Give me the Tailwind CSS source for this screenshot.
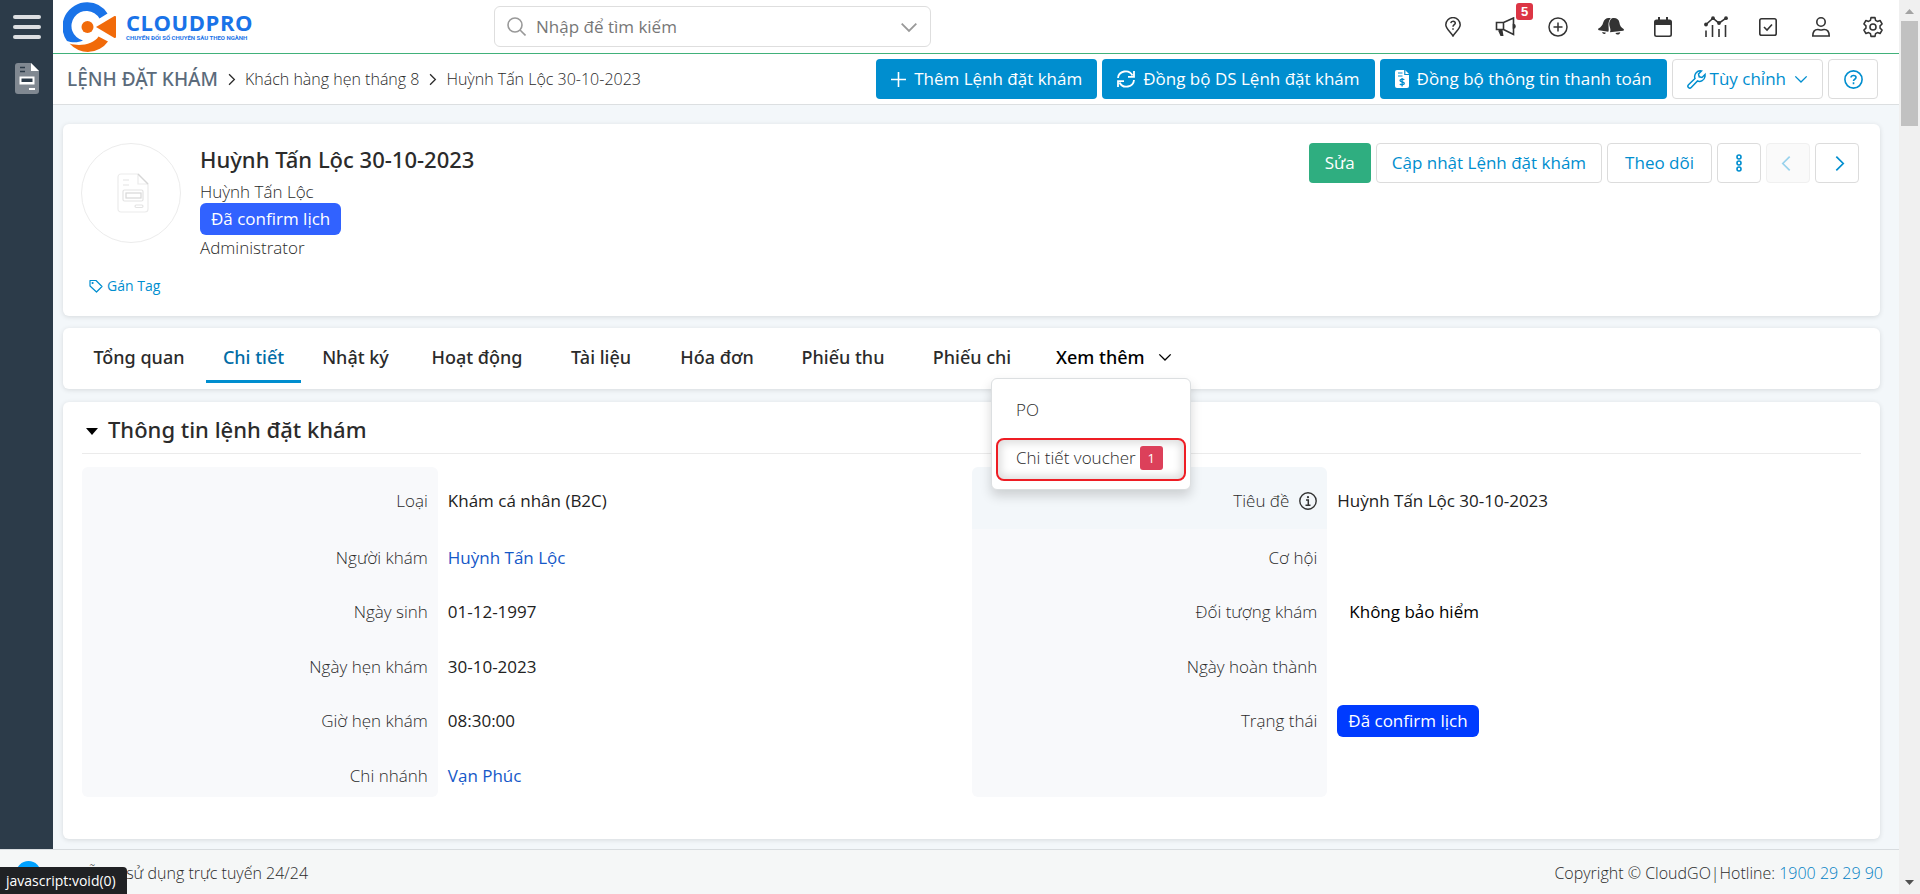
<!DOCTYPE html>
<html lang="vi">
<head>
<meta charset="utf-8">
<title>Lệnh đặt khám</title>
<script src="https://cdn.jsdelivr.net/npm/@tailwindcss/browser@4"></script>
</head>
<body class="flex h-screen overflow-hidden bg-[#f3f7fa] font-['Open_Sans','Noto_Sans',sans-serif] text-[17px] text-[#2b2b2b]">
<svg class="hidden">
  <symbol id="chev-down" viewBox="0 0 16 16"><path d="M1.5 5 8 11.5 14.5 5" fill="none" stroke="currentColor" stroke-width="1.6"/></symbol>
  <symbol id="chev-right" viewBox="0 0 16 16"><path d="M5 1.5 11.5 8 5 14.5" fill="none" stroke="currentColor" stroke-width="1.6"/></symbol>
</svg>

<div class="flex min-w-0 flex-1 flex-col">
  <div class="flex min-h-0 flex-1">
    <nav class="flex w-[53px] shrink-0 flex-col items-center bg-[#2c3b49] pt-[15px]" aria-label="Menu chính">
      <button class="flex w-7 flex-col gap-[6px]" aria-label="Mở menu">
        <span class="h-1 w-full rounded-full bg-[#dcdee1]"></span>
        <span class="h-1 w-full rounded-full bg-[#dcdee1]"></span>
        <span class="h-1 w-full rounded-full bg-[#dcdee1]"></span>
      </button>
      <a href="#" class="mt-6" aria-label="Lệnh đặt khám">
        <svg width="24" height="31" viewBox="0 0 24 31"><path d="M3 0h13l8 8v20a3 3 0 0 1-3 3H3a3 3 0 0 1-3-3V3a3 3 0 0 1 3-3z" fill="#808891"/><path d="M16 0v8h8z" fill="#fff"/><path d="M5 4.500h5M5 8.500h5" stroke="#2c3b49" stroke-width="1.500"/><rect x="4.500" y="13.500" width="15" height="8" fill="#fff"/><rect x="6.500" y="15.500" width="11" height="3.500" fill="#2c3b49"/><path d="M14 26h6" stroke="#fff" stroke-width="2"/></svg>
      </a>
    </nav>

    <main class="flex min-w-0 flex-1 flex-col">
      <header class="flex h-[54px] shrink-0 items-center border-b border-[#41b17a] bg-white pl-[10px]">
        <a href="#" class="flex items-center gap-[10px]" aria-label="CloudPro">
          <svg width="53" height="52" viewBox="0 0 53 52">
            <path d="M44.500 12.500A24.500 24.500 0 0 0 24.500 1.300A24.500 24.500 0 0 0 4 40C9 42 16 41.500 20 39.500A15 15 0 1 1 36.500 17.500Z" fill="#1a73e8"/>
            <path d="M6.500 42.500C17 46 31 43 35.500 35.500L45 40.500A24.500 24.500 0 0 1 6.500 42.500Z" fill="#f16a0a"/>
            <circle cx="24.500" cy="26" r="6" fill="#f16a0a"/>
            <path d="M33 26 51.500 15Q53 14.500 53 16V35.500Q53 37.500 51.500 37Z" fill="#f16a0a"/>
          </svg>
          <span class="flex w-[125px] flex-col whitespace-nowrap text-[#1a73e8]">
            <span class="text-[22px] leading-[18px] font-bold tracking-wide">CLOUDPRO</span>
            <span class="mt-1 font-['Roboto',sans-serif] text-[6px] leading-[6px] font-bold">CHUYỂN ĐỔI SỐ CHUYÊN SÂU THEO NGÀNH</span>
          </span>
        </a>
        <label class="ml-[243px] flex h-[41px] w-[437px] shrink-0 items-center rounded-md border border-[#dedede] px-3">
          <svg width="19" height="19" viewBox="0 0 19 19" fill="none" stroke="#999" stroke-width="1.600"><circle cx="8" cy="8" r="7"/><path d="m13 13 5.500 5.500"/></svg>
          <input type="text" placeholder="Nhập để tìm kiếm" aria-label="Tìm kiếm" class="ml-[10px] min-w-0 flex-1 outline-none placeholder:text-[#777]">
          <svg class="size-[18px] text-[#999]"><use href="#chev-down"/></svg>
        </label>
        <div class="ml-auto flex items-center">
          <button class="flex w-[52px] justify-center" aria-label="Hướng dẫn"><svg width="16" height="20" viewBox="0 0 16 20" fill="none" stroke="#333" stroke-width="1.500"><path d="M8 19C5 14.500.8 11.500.8 7.800a7.200 7.200 0 0 1 14.400 0C15.200 11.500 11 14.500 8 19z"/><path d="M5.800 6.200c.3-2.600 4.700-2.400 4.500.1C10.200 7.700 8 7.800 8 9.700M8 11.200v1.600"/></svg></button>
          <button class="relative flex w-[53px] justify-center" aria-label="Thông báo"><svg width="21" height="20" viewBox="0 0 21 20" fill="none" stroke="#333" stroke-width="1.600"><path d="M1.500 5.500h7v7h-7zM8.500 5.500 18.500 1v16.500L8.500 12.500"/><path d="M18.500 7.500c2 0 2 3.500 0 3.500z" fill="#333"/><path d="M3.500 13v1.500l2 4.500h3l-1-6z" fill="#333" stroke="none"/></svg><span class="absolute -top-[14px] left-[37px] flex h-[17px] w-[17px] items-center justify-center rounded-[3px] bg-[#dc3545] font-['Liberation_Sans',sans-serif] text-[13px] leading-none font-bold text-white">5</span></button>
          <button class="flex w-[52px] justify-center" aria-label="Thêm mới"><svg width="20" height="20" viewBox="0 0 20 20" fill="none" stroke="#333" stroke-width="1.500"><circle cx="10" cy="10" r="9"/><path d="M10 5.500v9M5.500 10h9"/></svg></button>
          <button class="flex w-[53px] justify-center" aria-label="Chuông báo"><svg width="26" height="19" viewBox="0 0 26 19" fill="#333"><path d="M12.800 1.200C9 .2 6.300 1.800 5.300 5.200 4.400 8.500 3 10 .4 11.500c-.5.600-.3 1.600.6 1.800l9.300 1.400C11.800 11.500 8.500 6 12.800 1.200zM4.200 15l3.800.7c-1 1.900-3.600 1.500-3.800-.7z"/><path d="M14 1.200c4.200-.8 6.800 1 7.400 4.300.5 3.300 1.700 5 4.200 6.500.6.600.3 1.600-.5 1.800l-13.200 1.400c1.700-3.400-1.200-5.500-.6-9.200.3-2.200 1.200-3.900 2.700-4.800zM17.500 16l4.800-.7c-.4 2.800-4 3.100-4.800.7z"/></svg></button>
          <button class="flex w-[52px] justify-center" aria-label="Lịch"><svg width="18" height="20" viewBox="0 0 18 20"><path d="M2.500 2.500H4V0h2v2.500h6V0h2v2.500h1.500A2.500 2.500 0 0 1 18 5v12.500a2.500 2.500 0 0 1-2.500 2.500h-13A2.500 2.500 0 0 1 0 17.500V5a2.500 2.500 0 0 1 2.500-2.500zM1.600 8v9.500c0 .5.400.9.900.9h13c.5 0 .9-.4.900-.9V8z" fill="#333" fill-rule="evenodd"/></svg></button>
          <button class="flex w-[53px] justify-center" aria-label="Báo cáo"><svg width="24" height="21" viewBox="0 0 24 21" fill="none" stroke="#333" stroke-width="1.600"><path d="m2 8.500 7-6.300 6 5L22 2.200"/><path d="M2 14.500V21M8.500 9v12M15 13v8M21.500 9v12"/><g fill="#333" stroke="none"><circle cx="2" cy="8.500" r="1.900"/><circle cx="9" cy="2.200" r="1.900"/><circle cx="15" cy="7" r="1.900"/><circle cx="22" cy="2.200" r="1.900"/></g></svg></button>
          <button class="flex w-[52px] justify-center" aria-label="Công việc"><svg width="18" height="18" viewBox="0 0 18 18" fill="none" stroke="#333" stroke-width="1.600"><rect x=".8" y=".8" width="16.400" height="16.400" rx="1.800"/><path d="m5 9 3 3 5-5.500"/></svg></button>
          <button class="flex w-[53px] justify-center" aria-label="Tài khoản"><svg width="18" height="20" viewBox="0 0 18 20" fill="none" stroke="#333" stroke-width="1.600"><circle cx="9" cy="5" r="4.200"/><path d="M.8 19c0-4 1.800-6.500 5-6.500 1.500 0 1.500.5 3.200.5s1.700-.5 3.200-.5c3.200 0 5 2.500 5 6.500z"/></svg></button>
          <button class="flex w-[52px] justify-center" aria-label="Cài đặt"><svg width="22" height="22" viewBox="0 0 24 24" fill="none" stroke="#333" stroke-width="1.700"><circle cx="12" cy="12" r="3.300"/><path d="M9.800 1.800h4.400l.6 2.900 2 1.200 2.900-1 2.200 3.800-2.200 2v2.600l2.200 2-2.200 3.800-2.900-1-2 1.200-.6 2.900H9.800l-.6-2.900-2-1.200-2.900 1-2.200-3.800 2.200-2v-2.600l-2.200-2 2.200-3.800 2.900 1 2-1.200z" stroke-linejoin="round"/></svg></button>
        </div>
      </header>

      <div class="flex h-[51px] shrink-0 items-center border-b border-[#dcdfe1] bg-white pr-[21px] pl-[14px]">
        <nav class="flex items-center text-base font-light" aria-label="Breadcrumb">
          <a href="#" class="font-['Noto_Sans',sans-serif] text-[19px] font-medium text-[#5b6b7b]">LỆNH ĐẶT KHÁM</a>
          <svg class="mx-[7px] size-[13px]"><use href="#chev-right"/></svg>
          <a href="#">Khách hàng hẹn tháng 8</a>
          <svg class="mx-[7px] size-[13px]"><use href="#chev-right"/></svg>
          <span>Huỳnh Tấn Lộc 30-10-2023</span>
        </nav>
        <div class="ml-auto flex items-center gap-[5px] whitespace-nowrap">
          <button class="flex h-10 items-center gap-2 rounded bg-[#008ecf] px-[15px] text-white"><svg width="15" height="15" viewBox="0 0 15 15" stroke="#fff" stroke-width="1.600"><path d="M7.500 0v15M0 7.500h15"/></svg>Thêm Lệnh đặt khám</button>
          <button class="flex h-10 items-center gap-2 rounded bg-[#008ecf] px-[15px] text-white"><svg width="18" height="18" viewBox="0 0 18 18" fill="none" stroke="#fff" stroke-width="1.800"><path d="M1 8c.5-7 11-9.500 14.500-2.500M17 1v5.800h-6M17 10c-.5 7-11 9.500-14.500 2.500M1 17v-5.800h6"/></svg>Đồng bộ DS Lệnh đặt khám</button>
          <button class="flex h-10 items-center gap-2 rounded bg-[#008ecf] px-[15px] text-white"><svg width="14" height="18" viewBox="0 0 14 18"><path d="M2 0h8l4 4v12a2 2 0 0 1-2 2H2a2 2 0 0 1-2-2V2a2 2 0 0 1 2-2z" fill="#fff"/><path d="M3 3h4.500M3 6h4.500M9.800 0v4.500H14" fill="none" stroke="#008ecf" stroke-width="1.200"/><path d="M9.300 9.800c-1-1-4.300-.9-4.300.8 0 1.700 4.300.9 4.300 2.700 0 1.700-3.300 1.700-4.500.7M7.100 8v8.500" fill="none" stroke="#008ecf" stroke-width="1.300"/></svg>Đồng bộ thông tin thanh toán</button>
          <button class="flex h-10 items-center gap-1 rounded border border-[#dcdcdc] bg-white px-[14px] text-[#008ecf]"><svg width="19" height="19" viewBox="0 0 19 19" fill="none" stroke="currentColor" stroke-width="1.500"><path d="m8 8.500-6.500 6.300a1.900 1.900 0 0 0 2.700 2.700L10.500 11c3 1.200 7-.8 7.500-4.500V4.500l-3 3-2.800-.7L11.500 4l3-3c-4-1-8 3-6.500 7.500z"/></svg>Tùy chỉnh<svg class="ml-1 size-[14px]"><use href="#chev-down"/></svg></button>
          <button class="flex h-10 w-[50px] items-center justify-center rounded border border-[#dcdcdc] bg-white text-[#008ecf]" aria-label="Trợ giúp"><svg width="19" height="19" viewBox="0 0 19 19" fill="none" stroke="currentColor" stroke-width="1.600"><circle cx="9.500" cy="9.500" r="8.600"/><path d="M7 7.500C7.200 4.700 12 4.900 12 7.500c0 1.800-2.500 1.700-2.500 3.500M9.500 12.300v1.900"/></svg></button>
        </div>
      </div>

      <div class="flex min-h-0 flex-1 flex-col pt-[19px] pr-[19px] pl-[10px]">
        <section class="flex h-[192px] shrink-0 items-start rounded-md bg-white pt-[19px] pr-[21px] pl-[18px] shadow-[0_1px_5px_rgba(0,0,0,.12)]">
          <div class="flex w-[119px] shrink-0 flex-col">
            <div class="flex size-[100px] items-center justify-center rounded-full border border-[#ececec] pl-1">
              <svg width="32" height="40" viewBox="0 0 32 40" fill="none" stroke="#e3e3e3" stroke-width="1.200"><path d="M4 1h17l10 10v25a3 3 0 0 1-3 3H4a3 3 0 0 1-3-3V4a3 3 0 0 1 3-3zM21 1v10h10" stroke="#ececec"/><path d="m21 1 10 10" stroke="#d6d6d6"/><path d="M6 7h6M6 12h6"/><rect x="6" y="17" width="20" height="11" rx="1.500"/><rect x="9" y="20" width="15" height="5" stroke="#d8d8d8"/><rect x="18" y="32" width="8" height="2.500" rx="1.200"/></svg>
            </div>
            <button class="mt-[31px] ml-2 flex items-center gap-1 text-sm leading-6 text-[#008ecf]"><svg width="14" height="14" viewBox="0 0 14 14" fill="none" stroke="currentColor" stroke-width="1.200"><path d="M1 1.500h6l6 6-5.500 5.500L1 7z" stroke-linejoin="round"/><circle cx="3.600" cy="4" r=".5"/></svg>Gán Tag</button>
          </div>
          <div class="flex flex-col items-start leading-[22px]">
            <h1 class="font-['Noto_Sans',sans-serif] text-[22px] leading-8 font-medium">Huỳnh Tấn Lộc 30-10-2023</h1>
            <span class="mt-[6px] font-light">Huỳnh Tấn Lộc</span>
            <span class="flex h-8 items-center rounded-md bg-[#3162ff] px-[11px] text-white">Đã confirm lịch</span>
            <span class="mt-[2px] font-light">Administrator</span>
          </div>
          <div class="ml-auto flex gap-[5px] whitespace-nowrap text-[#008ecf]">
            <button class="h-10 rounded bg-[#2fae80] px-4 text-white">Sửa</button>
            <button class="h-10 rounded border border-[#dcdcdc] px-[15px]">Cập nhật Lệnh đặt khám</button>
            <button class="h-10 rounded border border-[#dcdcdc] px-[17px]">Theo dõi</button>
            <button class="flex h-10 w-11 items-center justify-center rounded border border-[#dcdcdc]" aria-label="Thêm thao tác"><svg width="8" height="18" viewBox="0 0 8 18" fill="none" stroke="currentColor" stroke-width="1.600"><circle cx="4" cy="3" r="2"/><circle cx="4" cy="9" r="2"/><circle cx="4" cy="15" r="2"/></svg></button>
            <button disabled class="flex h-10 w-11 items-center justify-center rounded border border-[#f0f0f0] bg-[#fafafa] pr-1 text-[#99d2ec]" aria-label="Trước"><svg class="size-[17px] rotate-180"><use href="#chev-right"/></svg></button>
            <button class="flex h-10 w-11 items-center justify-center rounded border border-[#dcdcdc] pl-1" aria-label="Sau"><svg class="size-[17px]"><use href="#chev-right"/></svg></button>
          </div>
        </section>

        <nav class="relative z-10 mt-3 flex h-[61px] shrink-0 rounded-md bg-white pl-[14px] font-['Noto_Sans',sans-serif] text-lg font-medium whitespace-nowrap shadow-[0_1px_5px_rgba(0,0,0,.12)]" aria-label="Các tab">
          <a href="#" class="flex h-[55px] w-[124px] items-center justify-center pt-[3px]">Tổng quan</a>
          <a href="#" class="mx-[5px] flex h-[55px] w-[95px] items-center justify-center border-b-3 border-[#008ecf] pt-[6px] text-[#006ca5]">Chi tiết</a>
          <a href="#" class="flex h-[55px] w-[99px] items-center justify-center pt-[3px]">Nhật ký</a>
          <a href="#" class="flex h-[55px] w-[144px] items-center justify-center pt-[3px]">Hoạt động</a>
          <a href="#" class="flex h-[55px] w-[104px] items-center justify-center pt-[3px]">Tài liệu</a>
          <a href="#" class="flex h-[55px] w-[128px] items-center justify-center pt-[3px]">Hóa đơn</a>
          <a href="#" class="flex h-[55px] w-[124px] items-center justify-center pt-[3px]">Phiếu thu</a>
          <a href="#" class="flex h-[55px] w-[134px] items-center justify-center pt-[3px]">Phiếu chi</a>
          <div class="relative h-[55px]">
            <button class="flex h-[55px] items-center gap-[13px] pt-[3px] pr-6 pl-[17px] text-black">Xem thêm<svg class="size-[14px]"><use href="#chev-down"/></svg></button>
            <ul class="absolute top-[50px] -left-12 flex h-[112px] w-[200px] flex-col rounded-md border border-[#dcdfe1] bg-white pt-[10px] font-['Open_Sans','Noto_Sans',sans-serif] text-[17px] font-light shadow-[0_6px_12px_rgba(0,0,0,.16)]">
              <li><a href="#" class="flex h-[42px] items-center pl-6">PO</a></li>
              <li class="mx-1 mt-[7px]"><a href="#" class="flex h-[43px] items-center gap-1 rounded-lg border-2 border-[#ee1d24] pb-[3px] pl-[18px] shadow-[inset_0_0_8px_3px_rgba(0,0,0,.14)]">Chi tiết voucher<span class="flex h-6 w-[23px] items-center justify-center rounded-[3px] bg-[#dc405a] text-[13px] leading-none font-normal text-white">1</span></a></li>
            </ul>
          </div>
        </nav>

        <section class="mt-[13px] h-[437px] shrink-0 rounded-md bg-white px-[19px] shadow-[0_1px_5px_rgba(0,0,0,.12)]">
          <h2 class="flex h-[52px] items-center border-b border-[#ebebeb] pt-[3px] font-['Noto_Sans',sans-serif] text-[22px] font-medium"><button class="flex items-center gap-[10px] pl-1" aria-expanded="true"><svg class="mt-1" width="12" height="7" viewBox="0 0 12 7"><path d="M0 0h12L6 7z" fill="#000"/></svg>Thông tin lệnh đặt khám</button></h2>
          <div class="mt-[13px] grid grid-cols-2 items-start">
            <table class="w-full table-fixed leading-[30px] [&_td]:pl-[10px] [&_td]:align-top [&_td]:text-[#222] [&_th]:w-2/5 [&_th]:bg-[#f8f9fb] [&_th]:pr-[10px] [&_th]:text-right [&_th]:align-top [&_th]:font-light">
              <tr class="h-[62px]"><th scope="row" class="rounded-t-md pt-[19px]">Loại</th><td class="pt-[19px]">Khám cá nhân (B2C)</td></tr>
              <tr class="h-[54px]"><th scope="row" class="pt-[14px]">Người khám</th><td class="pt-[14px]"><a href="#" class="text-[#1558c8]">Huỳnh Tấn Lộc</a></td></tr>
              <tr class="h-[55px]"><th scope="row" class="pt-[14px]">Ngày sinh</th><td class="pt-[14px]">01-12-1997</td></tr>
              <tr class="h-[54px]"><th scope="row" class="pt-[14px]">Ngày hẹn khám</th><td class="pt-[14px]">30-10-2023</td></tr>
              <tr class="h-[55px]"><th scope="row" class="pt-[14px]">Giờ hẹn khám</th><td class="pt-[14px]">08:30:00</td></tr>
              <tr class="h-[50px]"><th scope="row" class="rounded-b-md pt-[14px]">Chi nhánh</th><td class="pt-[14px]"><a href="#" class="text-[#1558c8]">Vạn Phúc</a></td></tr>
            </table>
            <table class="w-full table-fixed leading-[30px] [&_td]:pl-[10px] [&_td]:align-top [&_td]:text-[#222] [&_th]:w-2/5 [&_th]:bg-[#f8f9fb] [&_th]:pr-[10px] [&_th]:text-right [&_th]:align-top [&_th]:font-light">
              <tr class="h-[62px]"><th scope="row" class="rounded-t-md bg-[#f3f7fa]! pt-[19px]"><span class="inline-flex items-center gap-[10px]">Tiêu đề<svg width="18" height="18" viewBox="0 0 18 18" fill="none" stroke="#333" stroke-width="1.400"><circle cx="9" cy="9" r="8.200"/><path d="M7 8h2.300v5M6.500 13.200h5" stroke-width="1.500"/><circle cx="9" cy="5.200" r="1.100" fill="#333" stroke="none"/></svg></span></th><td class="pt-[19px]">Huỳnh Tấn Lộc 30-10-2023</td></tr>
              <tr class="h-[54px]"><th scope="row" class="pt-[14px]">Cơ hội</th><td></td></tr>
              <tr class="h-[55px]"><th scope="row" class="pt-[14px]">Đối tượng khám</th><td class="pt-[14px]"><span class="px-3 text-black">Không bảo hiểm</span></td></tr>
              <tr class="h-[54px]"><th scope="row" class="pt-[14px]">Ngày hoàn thành</th><td></td></tr>
              <tr class="h-[55px]"><th scope="row" class="pt-[14px]">Trạng thái</th><td class="pt-[13px]"><span class="inline-flex h-8 items-center rounded-md bg-[#003bff] px-[11px] text-white">Đã confirm lịch</span></td></tr>
              <tr class="h-[50px]"><th class="rounded-b-md"></th><td></td></tr>
            </table>
          </div>
        </section>
      </div>
    </main>
  </div>

  <footer class="relative flex h-[45px] shrink-0 items-center justify-between overflow-hidden border-t border-[#d8dcdf] bg-[#f5f7f7] px-4 pt-[2px] text-base font-light whitespace-nowrap">
    <div class="flex items-center"><span class="size-[25px] rounded-full bg-[#00a1ff]"></span><span class="ml-[35px]">Hỗ trợ sử dụng trực tuyến 24/24</span></div>
    <p>Copyright © CloudGO|Hotline: <a href="#" class="text-[#0080c4]">1900 29 29 90</a></p>
    <div class="absolute bottom-0 left-0 flex h-[27px] w-[127px] items-center rounded-tr bg-[#202124] pl-[6px] text-[14px] font-normal text-white">javascript:void(0)</div>
  </footer>
</div>

<div class="flex w-[21px] shrink-0 flex-col items-center bg-[#f0f0f0]" aria-hidden="true">
  <svg class="mt-[9px]" width="9" height="5" viewBox="0 0 9 5"><path d="M4.500 0 9 5H0z" fill="#a3a3a3"/></svg>
  <div class="mt-[7px] h-[105px] w-[17px] bg-[#c1c1c1]"></div>
  <svg class="mt-auto mb-[9px]" width="9" height="5" viewBox="0 0 9 5"><path d="M0 0h9L4.500 5z" fill="#505050"/></svg>
</div>
</body>
</html>
